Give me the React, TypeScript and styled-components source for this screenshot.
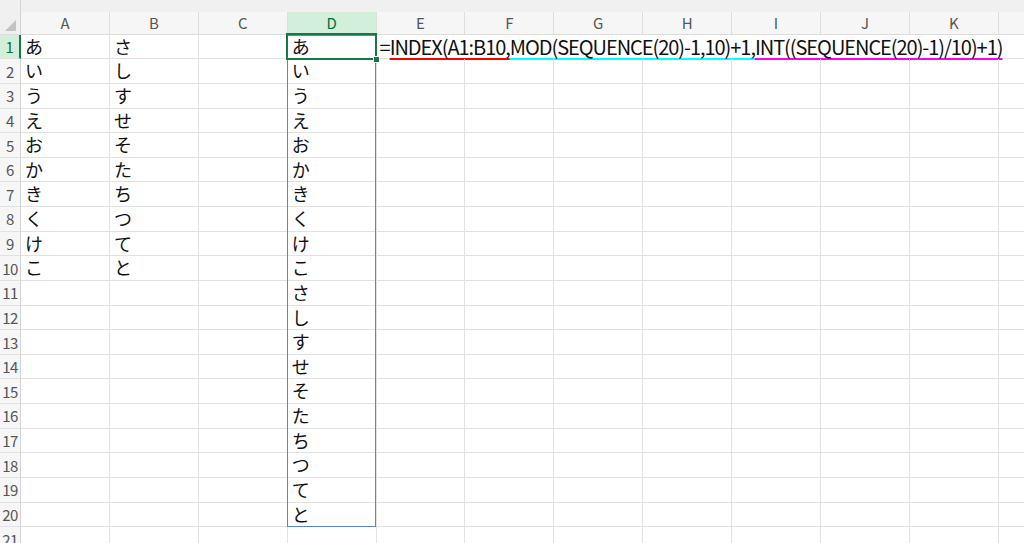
import React from "react";
import styled, { createGlobalStyle } from "styled-components";

const COL_W = 88.9;
const ROW_H = 24.63;
const HEAD_W = 21;
const TOP_H = 12;
const COLHEAD_H = 22.7;

const columns = ["A", "B", "C", "D", "E", "F", "G", "H", "I", "J", "K", "L"];
const colA = ["あ", "い", "う", "え", "お", "か", "き", "く", "け", "こ"];
const colB = ["さ", "し", "す", "せ", "そ", "た", "ち", "つ", "て", "と"];
const spill = [...colA, ...colB];

const GlobalStyle = createGlobalStyle`
  html, body {
    margin: 0;
    padding: 0;
    background: #ffffff;
  }
  body {
    font-family: "Noto Sans CJK JP", "Liberation Sans", sans-serif;
  }
`;

const Sheet = styled.div`
  position: relative;
  width: 1024px;
  height: 543px;
  overflow: hidden;
  background: #ffffff;
`;

const HeaderArea = styled.div`
  display: flex;
  height: ${TOP_H + COLHEAD_H}px;
`;

const Corner = styled.div`
  position: relative;
  flex: 0 0 ${HEAD_W}px;
  box-sizing: border-box;
  background: #f0f0f0;
  border-right: 1px solid #d4d4d4;
  border-bottom: 1px solid #dcdcdc;

  &::after {
    content: "";
    position: absolute;
    right: 4px;
    bottom: 3px;
    width: 0;
    height: 0;
    border-left: 11px solid transparent;
    border-bottom: 11px solid #c2c2c2;
  }
`;

const HeaderStack = styled.div`
  flex: 1;
  display: flex;
  flex-direction: column;
`;

const Strip = styled.div`
  height: ${TOP_H}px;
  background: #f0f0f0;
`;

const ColHeadRow = styled.div`
  display: flex;
  height: ${COLHEAD_H}px;
`;

const ColHead = styled.div<{ $active?: boolean }>`
  flex: 0 0 ${COL_W}px;
  box-sizing: border-box;
  display: flex;
  align-items: center;
  justify-content: center;
  background: ${(p) => (p.$active ? "#d2efdc" : "#f6f6f6")};
  color: ${(p) => (p.$active ? "#0f6a3a" : "#555555")};
  border-right: 1px solid #dedede;
  border-bottom: 1px solid ${(p) => (p.$active ? "#107c41" : "#dcdcdc")};
  font-size: 15px;
`;

const Row = styled.div`
  display: flex;
  height: ${ROW_H}px;
`;

const RowHead = styled.div<{ $active?: boolean }>`
  flex: 0 0 ${HEAD_W}px;
  box-sizing: border-box;
  display: flex;
  align-items: center;
  justify-content: center;
  background: ${(p) => (p.$active ? "#d2efdc" : "#f6f6f6")};
  color: ${(p) => (p.$active ? "#0f6a3a" : "#555555")};
  border-right: ${(p) => (p.$active ? "2px solid #107c41" : "1px solid #d4d4d4")};
  border-bottom: 1px solid #e1e1e1;
  font-size: 15px;
  letter-spacing: -0.5px;
`;

const Cell = styled.div`
  flex: 0 0 ${COL_W}px;
  box-sizing: border-box;
  border-right: 1px solid #e1e1e1;
  border-bottom: 1px solid #e1e1e1;
  padding-left: 4px;
  font-size: 18px;
  line-height: ${ROW_H - 1}px;
  color: #111111;
  white-space: nowrap;
`;

const FormulaCell = styled.div`
  flex: 1;
  box-sizing: border-box;
  border-bottom: 1px solid #e1e1e1;
  padding-left: 3px;
  font-size: 20px;
  letter-spacing: -1.05px;
  line-height: ${ROW_H - 1}px;
  color: #111111;
  white-space: nowrap;
`;

const Arg = styled.span<{ $color: string }>`
  text-decoration: underline;
  text-decoration-color: ${(p) => p.$color};
  text-decoration-thickness: 2px;
  text-decoration-skip-ink: none;
  text-underline-offset: 3px;
`;

const SpillRange = styled.div`
  position: absolute;
  left: ${HEAD_W + COL_W * 3 - 0.5}px;
  top: ${TOP_H + COLHEAD_H}px;
  width: ${COL_W}px;
  height: ${ROW_H * 20 - 0.5}px;
  box-sizing: border-box;
  border: 1px solid #5b84d6;
  pointer-events: none;
`;

const Selection = styled.div`
  position: absolute;
  left: ${HEAD_W + COL_W * 3 - 1.5}px;
  top: ${TOP_H + COLHEAD_H - 2}px;
  width: ${COL_W + 2}px;
  height: ${ROW_H + 2.5}px;
  box-sizing: border-box;
  border: 2px solid #107c41;
  pointer-events: none;
`;

const FillHandle = styled.div`
  position: absolute;
  left: ${HEAD_W + COL_W * 4 - 2.5}px;
  top: ${TOP_H + COLHEAD_H + ROW_H - 2}px;
  width: 5px;
  height: 5px;
  background: #107c41;
  outline: 1px solid #ffffff;
`;

const App = () => {
  const rows = Array.from({ length: 21 }, (_, i) => i + 1);

  return (
    <>
      <GlobalStyle />
      <Sheet>
        <HeaderArea>
          <Corner />
          <HeaderStack>
            <Strip />
            <ColHeadRow>
              {columns.map((c) => (
                <ColHead key={c} $active={c === "D"}>
                  {c}
                </ColHead>
              ))}
            </ColHeadRow>
          </HeaderStack>
        </HeaderArea>

        {rows.map((r) => (
          <Row key={r}>
            <RowHead $active={r === 1}>{r}</RowHead>
            <Cell>{colA[r - 1] ?? ""}</Cell>
            <Cell>{colB[r - 1] ?? ""}</Cell>
            <Cell />
            <Cell>{spill[r - 1] ?? ""}</Cell>
            {r === 1 ? (
              <FormulaCell>
                =<Arg $color="#ff0000">INDEX(A1:B10,</Arg>
                <Arg $color="#00ffff">MOD(SEQUENCE(20)-1,10)+1,</Arg>
                <Arg $color="#ff00ff">INT((SEQUENCE(20)-1)/10)+1)</Arg>
              </FormulaCell>
            ) : (
              columns.slice(4).map((c) => <Cell key={c} />)
            )}
          </Row>
        ))}

        <SpillRange />
        <Selection />
        <FillHandle />
      </Sheet>
    </>
  );
};

export default App;
